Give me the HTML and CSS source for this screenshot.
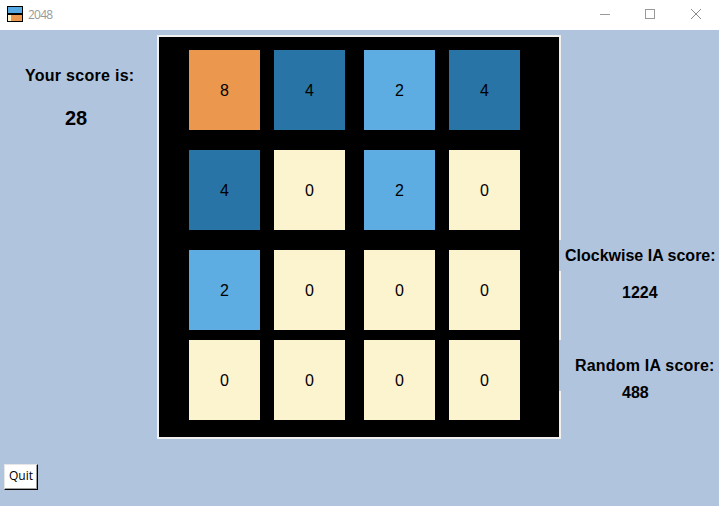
FILE: index.html
```html
<!DOCTYPE html>
<html lang="en">
<head>
<meta charset="utf-8">
<title>2048</title>
<link rel="stylesheet" href="styles.css">
</head>
<body>
<header class="titlebar">
  <svg class="app-icon" width="16" height="16" viewBox="0 0 16 16" shape-rendering="crispEdges">
    <rect width="16" height="16" fill="#000"/>
    <rect x="1" y="1" width="14" height="6" fill="#57a9e2"/>
    <rect x="1" y="9" width="3" height="6" fill="#fcf3cf"/>
    <rect x="4" y="9" width="11" height="6" fill="#eb984e"/>
  </svg>
  <span class="title">2048</span>
  <div class="controls">
    <svg width="46" height="30" viewBox="0 0 46 30" shape-rendering="crispEdges"><path d="M19 14.5h10" stroke="#999" fill="none"/></svg>
    <svg width="46" height="30" viewBox="0 0 46 30" shape-rendering="crispEdges"><path d="M18.500 9.500h9v9h-9z" stroke="#999" fill="none"/></svg>
    <svg width="46" height="30" viewBox="0 0 46 30"><path d="M18 9l10 10M28 9l-10 10" stroke="#8c8c8c" fill="none"/></svg>
  </div>
</header>
<main class="content">
  <section class="side player">
    <h2 class="label">Your score is:</h2>
    <p class="score big">28</p>
    <button class="quit">Quit</button>
  </section>
  <section class="board">
    <div class="tile t8">8</div><div class="tile t4">4</div><div class="tile t2">2</div><div class="tile t4">4</div>
    <div class="tile t4">4</div><div class="tile t0">0</div><div class="tile t2">2</div><div class="tile t0">0</div>
    <div class="tile t2">2</div><div class="tile t0">0</div><div class="tile t0">0</div><div class="tile t0">0</div>
    <div class="tile t0">0</div><div class="tile t0">0</div><div class="tile t0">0</div><div class="tile t0">0</div>
  </section>
  <section class="side rivals">
    <h2 class="label clockwise">Clockwise IA score:</h2>
    <p class="score clockwise-score">1224</p>
    <h2 class="label random">Random IA score:</h2>
    <p class="score random-score">488</p>
  </section>
</main>
</body>
</html>
```
FILE: styles.css
```css
* { box-sizing: border-box; }

body {
  margin: 0;
  width: 719px;
  height: 506px;
  overflow: hidden;
  display: flex;
  flex-direction: column;
  background: #b0c4de;
  color: #000;
  font-family: "Liberation Sans", Arial, sans-serif;
  font-size: 16px;
}

.titlebar {
  display: flex;
  align-items: center;
  height: 30px;
  padding-left: 7px;
  background: #fff;
}

.app-icon { margin-bottom: 2px; }

.title {
  margin: 0 0 2px 5px;
  color: #999;
  font-family: "Open Sans", sans-serif;
  font-size: 12px;
  letter-spacing: -0.75px;
}

.controls { display: flex; margin-left: auto; }

.controls svg { display: block; }

.content {
  display: grid;
  grid-template-columns: 157px 404px 158px;
  height: 476px;
}

.side { display: flex; flex-direction: column; }

.label, .score {
  margin: 0;
  font-size: 16px;
  font-weight: bold;
  white-space: nowrap;
}

.player .label {
  margin: 36px 0 0 25px;
  line-height: 20px;
  letter-spacing: 0.28px;
}

.score.big {
  margin: 20px 0 0 65px;
  font-size: 20px;
  line-height: 24px;
}

.quit {
  width: 34px;
  height: 26px;
  margin: 334px 0 0 4px;
  padding: 0 0 2px;
  border: 1px solid;
  border-color: #e6e6e6 #000 #000 #e6e6e6;
  border-radius: 0;
  background: #fff;
  box-shadow: inset -1px -1px #a0a0a0;
  color: #000;
  font-family: "Open Sans", sans-serif;
  font-size: 12px;
  line-height: 22px;
}

.board {
  display: grid;
  grid-template-columns: 85px 90px 85px 71px;
  grid-template-rows: 100px 100px 90px 80px;
  height: 404px;
  margin-top: 5px;
  padding: 13px 0 0 30px;
  border: 2px solid #f0f0f0;
  background: #000;
}

.tile {
  width: 71px;
  height: 80px;
  line-height: 82px;
  text-align: center;
}

.t0 { background: #fcf3cf; }
.t2 { background: #5dade2; }
.t4 { background: #2874a6; }
.t8 { background: #eb984e; }

.rivals .label {
  position: relative;
  margin-left: -2px;
  background: #b0c4de;
}

.rivals .clockwise {
  height: 31px;
  margin-top: 210px;
  padding-left: 6px;
  line-height: 31px;
}

.clockwise-score {
  margin: 11px 0 0 61px;
  line-height: 22px;
}

.rivals .random {
  height: 51px;
  margin-top: 36px;
  padding-left: 16px;
  line-height: 51px;
  letter-spacing: 0.2px;
}

.random-score {
  margin: -9px 0 0 61px;
  line-height: 22px;
  position: relative;
}
```
